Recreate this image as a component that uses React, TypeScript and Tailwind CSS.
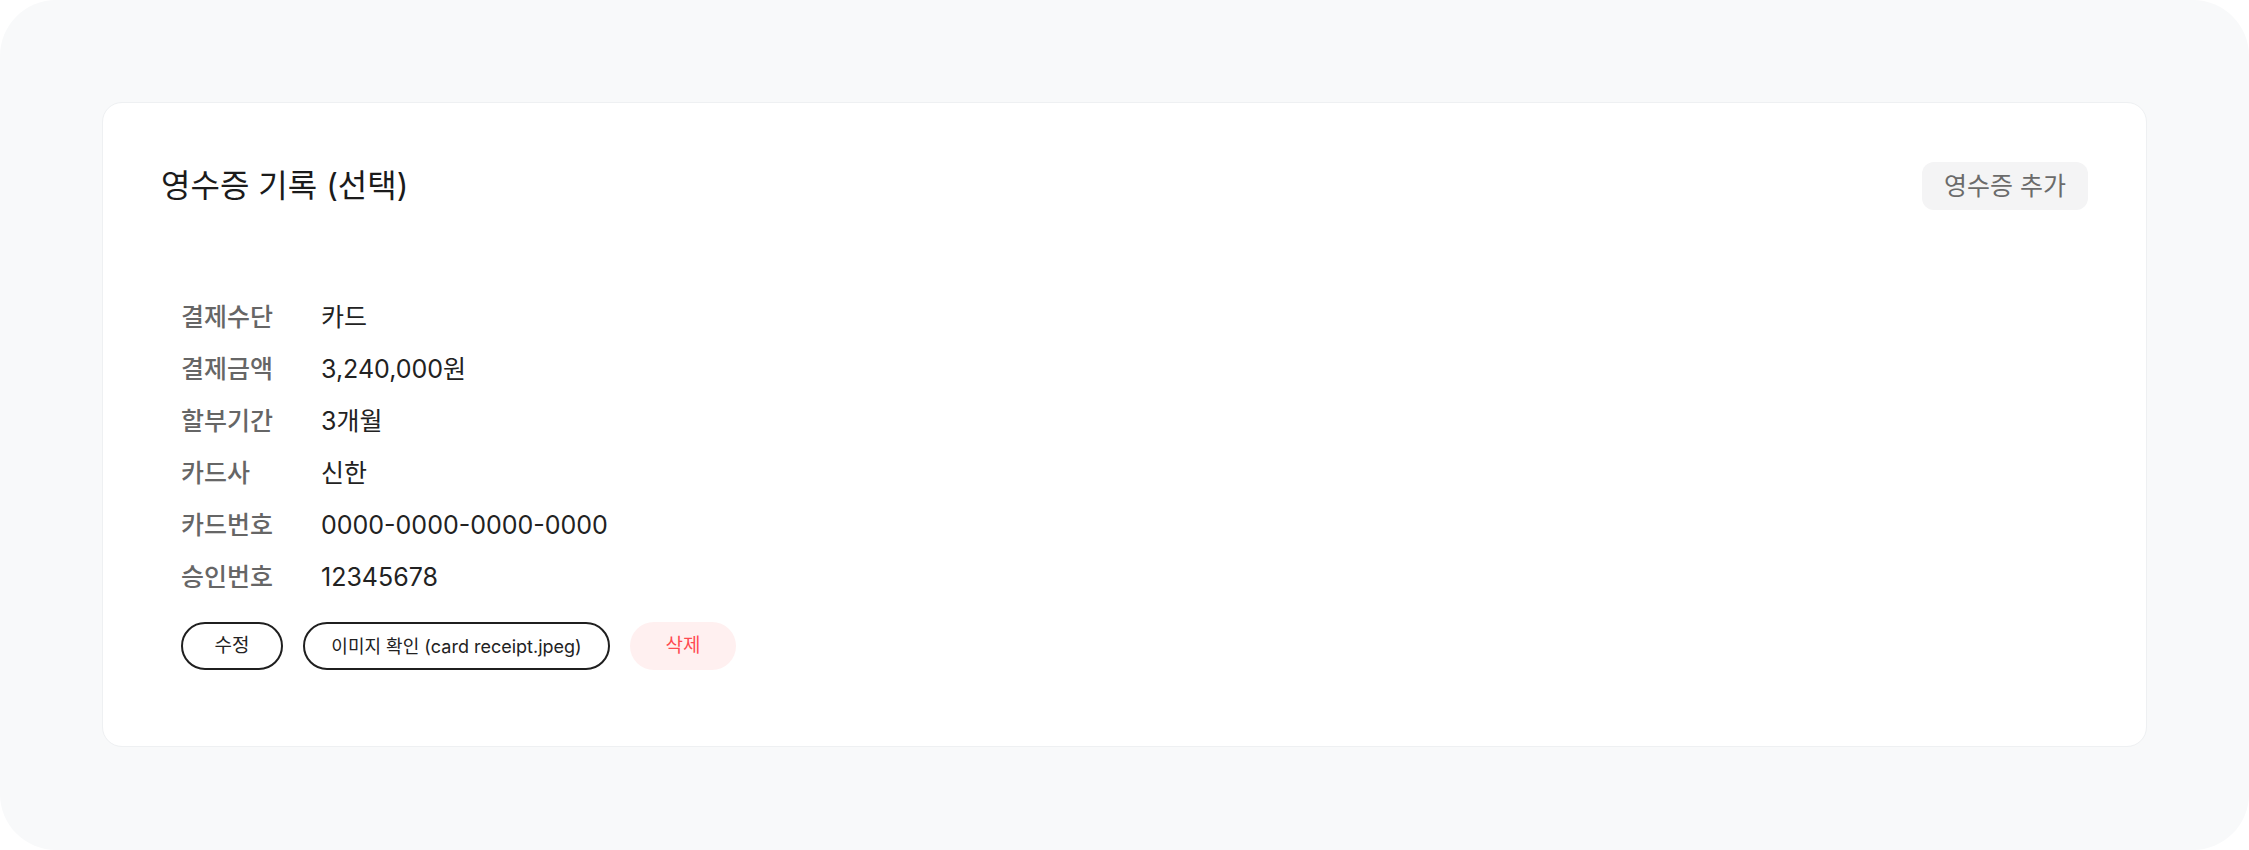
import React from "react";

const rows: [string, string][] = [
  ["결제수단", "카드"],
  ["결제금액", "3,240,000원"],
  ["할부기간", "3개월"],
  ["카드사", "신한"],
  ["카드번호", "0000-0000-0000-0000"],
  ["승인번호", "12345678"],
];

export default function App() {
  return (
    <div className="w-[2249px] h-[850px] bg-white font-['Inter','Noto_Sans_CJK_KR',sans-serif]">
      <div className="h-full rounded-[56px] bg-[#f8f9fa] p-[102px]">
        <div className="rounded-[20px] border border-[#eef0f2] bg-white px-[58px] pt-[59px] pb-[76px]">
          <div className="flex h-12 items-center justify-between">
            <h1 className="text-[32px] font-normal leading-none text-[#1b1b1b]">영수증 기록 (선택)</h1>
            <button className="h-12 w-[166px] rounded-xl bg-[#f4f4f5] text-[25px] leading-none text-[#6b6b6b]">
              영수증 추가
            </button>
          </div>
          <div className="mt-[90px] px-5">
            <div className="flex flex-col gap-4">
              {rows.map(([k, v]) => (
                <div key={k} className="flex h-9 items-center text-[25px]">
                  <span className="w-[140px] font-medium text-[#666666]">{k}</span>
                  <span className="text-[#222222]">{v}</span>
                </div>
              ))}
            </div>
            <div className="mt-[26px] flex gap-5">
              <button className="h-12 w-[102px] rounded-full border-2 border-[#1f1f1f] text-[19px] text-[#222222]">
                수정
              </button>
              <button className="h-12 w-[307px] rounded-full border-2 border-[#1f1f1f] text-[18px] text-[#222222]">
                이미지 확인 (card receipt.jpeg)
              </button>
              <button className="h-12 w-[106px] rounded-full bg-[#fff0f0] text-[19px] text-[#ff4a52]">
                삭제
              </button>
            </div>
          </div>
        </div>
      </div>
    </div>
  );
}
